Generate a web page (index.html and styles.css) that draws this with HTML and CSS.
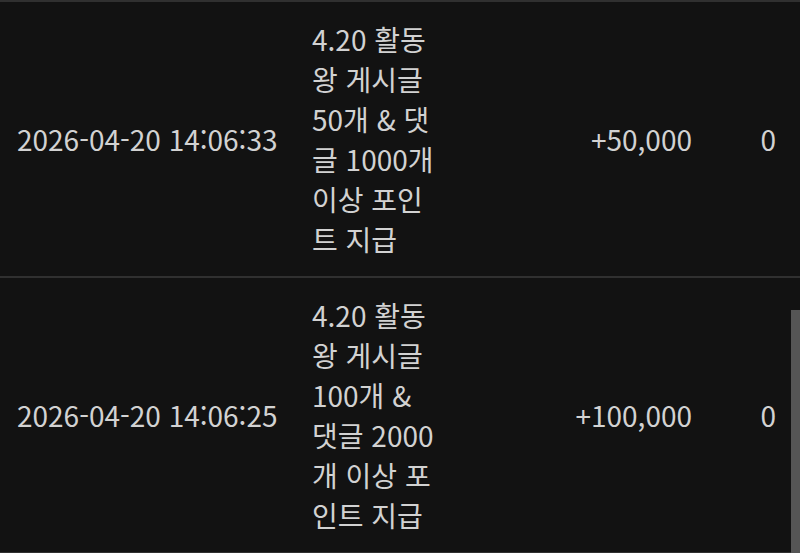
FILE: index.html
```html
<!DOCTYPE html>
<html lang="ko">
<head>
<meta charset="utf-8">
<link rel="stylesheet" href="styles.css">
</head>
<body>
<div class="list">
  <div class="row">
    <div class="cell date">2026-04-20 14:06:33</div>
    <div class="cell desc">4.20 활동왕 게시글 50개 &amp; 댓글 1000개 이상 포인트 지급</div>
    <div class="cell amount">+50,000</div>
    <div class="cell bal">0</div>
  </div>
  <div class="row">
    <div class="cell date">2026-04-20 14:06:25</div>
    <div class="cell desc">4.20 활동왕 게시글 100개 &amp; 댓글 2000개 이상 포인트 지급</div>
    <div class="cell amount">+100,000</div>
    <div class="cell bal">0</div>
  </div>
</div>
<div class="scrollbar"></div>
</body>
</html>
```
FILE: styles.css
```css
html, body {
  margin: 0;
  padding: 0;
  background: #121212;
  height: 100%;
  overflow: hidden;
}
body {
  font-family: "Noto Sans CJK KR", "Noto Sans", sans-serif;
  font-size: 28px;
  line-height: 40px;
  color: #d2d2d2;
}
.list {
  border-top: 2px solid #303030;
}
.row {
  display: grid;
  grid-template-columns: 295px 128px 1fr 84px;
  align-items: center;
  padding: 17px 24px 17px 17px;
  border-bottom: 2px solid #303030;
}
.date {
  white-space: nowrap;
}
.desc {
  width: 126px;
}
.amount {
  text-align: right;
}
.bal {
  text-align: right;
}
.scrollbar {
  position: absolute;
  right: 0;
  top: 310px;
  width: 9px;
  height: 260px;
  background: #555555;
}
```
